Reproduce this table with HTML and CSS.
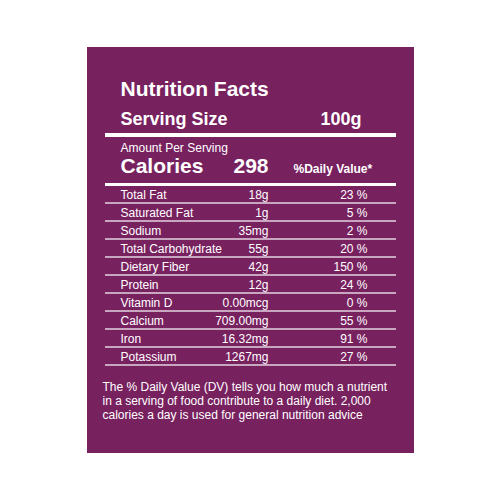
FILE: index.html
```html
<!DOCTYPE html>
<html lang="en">
<head>
  <meta charset="UTF-8">
  <title>Nutrition Facts</title>
  <link rel="stylesheet" href="styles.css">
</head>
<body>
  <div class="label">
    <h1>Nutrition Facts</h1>
    <div class="serving">
      <span>Serving Size</span>
      <span>100g</span>
    </div>

    <div class="thick"></div>

    <p class="per">Amount Per Serving</p>
    <div class="calories">
      <span class="cal-name">Calories</span>
      <span class="cal-num">298</span>
      <span class="dv">%Daily Value*</span>
    </div>

    <div class="thick thin-bar"></div>

    <div class="rows">
      <div class="row"><span>Total Fat</span><span class="amt">18g</span><span class="pct">23 %</span></div>
      <div class="row"><span>Saturated Fat</span><span class="amt">1g</span><span class="pct">5 %</span></div>
      <div class="row"><span>Sodium</span><span class="amt">35mg</span><span class="pct">2 %</span></div>
      <div class="row"><span>Total Carbohydrate</span><span class="amt">55g</span><span class="pct">20 %</span></div>
      <div class="row"><span>Dietary Fiber</span><span class="amt">42g</span><span class="pct">150 %</span></div>
      <div class="row"><span>Protein</span><span class="amt">12g</span><span class="pct">24 %</span></div>
      <div class="row"><span>Vitamin D</span><span class="amt">0.00mcg</span><span class="pct">0 %</span></div>
      <div class="row"><span>Calcium</span><span class="amt">709.00mg</span><span class="pct">55 %</span></div>
      <div class="row"><span>Iron</span><span class="amt">16.32mg</span><span class="pct">91 %</span></div>
      <div class="row"><span>Potassium</span><span class="amt">1267mg</span><span class="pct">27 %</span></div>
    </div>

    <p class="note">The % Daily Value (DV) tells you how much a nutrient in a serving of food contribute to a daily diet. 2,000 calories a day is used for general nutrition advice</p>
  </div>
</body>
</html>
```

FILE: styles.css
```css
* {
  margin: 0;
  padding: 0;
  box-sizing: border-box;
  font-family: 'Liberation Sans', Arial, sans-serif;
}

body {
  background-color: #fff;
  display: flex;
  justify-content: center;
  align-items: center;
  height: 100vh;
}

.label {
  background-color: #78215f;
  color: #fff;
  width: 327px;
  height: 406px;
  padding: 30px 18px 0;
}

h1 {
  font-size: 21px;
  line-height: 24px;
  font-weight: bold;
  padding-left: 16px;
}

.serving {
  display: flex;
  justify-content: space-between;
  font-size: 18px;
  line-height: 22px;
  font-weight: bold;
  margin-top: 7px;
  padding: 0 34px 0 16px;
}

.thick {
  height: 4px;
  background: #fff;
  margin-top: 3px;
}

.thin-bar {
  height: 3px;
}

.per {
  font-size: 12px;
  line-height: 14px;
  margin-top: 4px;
  padding-left: 16px;
}

.calories {
  display: grid;
  grid-template-columns: minmax(0, 1fr) 60px 103px;
  align-items: baseline;
  padding: 0 24px 0 16px;
  line-height: 22px;
}

.cal-name,
.cal-num {
  font-size: 21px;
  font-weight: bold;
  white-space: nowrap;
}

.cal-num {
  text-align: right;
}

.dv {
  font-size: 12px;
  font-weight: bold;
  padding-left: 25px;
  white-space: nowrap;
}

.row {
  display: grid;
  grid-template-columns: minmax(0, 1fr) 60px 99px;
  font-size: 12px;
  line-height: 13px;
  padding: 3px 28px 0 16px;
  border-bottom: 2px solid rgba(255, 255, 255, 0.6);
  white-space: nowrap;
}

.amt,
.pct {
  text-align: right;
}

.note {
  font-size: 12px;
  line-height: 14px;
  margin: 14px 0 0 -2px;
  width: 293px;
}
```
